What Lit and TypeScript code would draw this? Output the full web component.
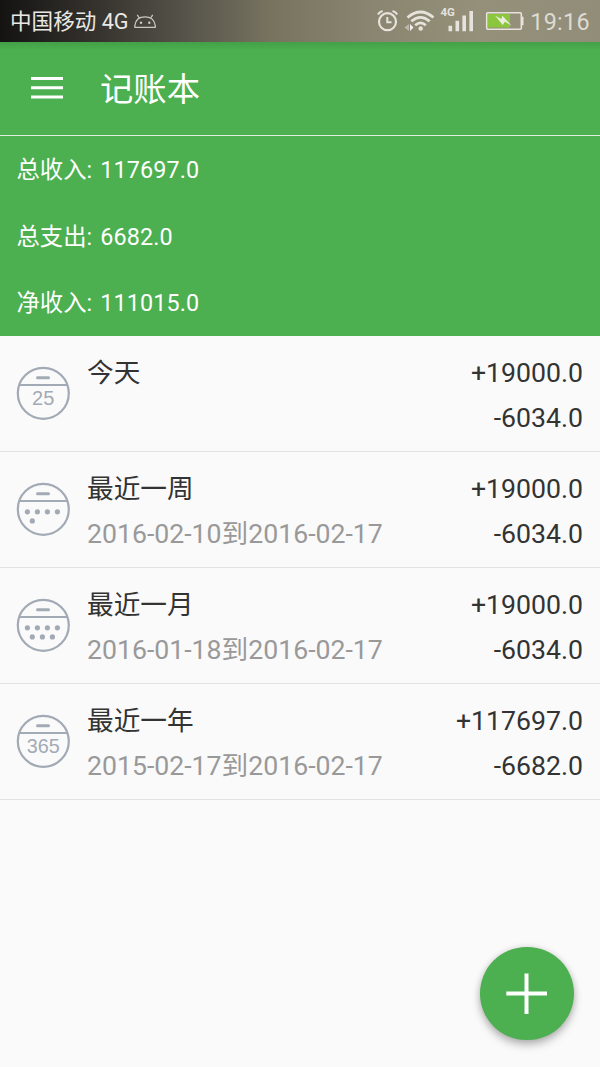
import { LitElement, html, css, svg, nothing } from "lit";
import { customElement, property } from "lit/decorators.js";

const FONT = css`Roboto, "Noto Sans CJK SC", sans-serif`;

@customElement("status-bar")
class StatusBar extends LitElement {
  static styles = css`
    :host {
      display: flex;
      align-items: center;
      height: 42px;
      padding: 0 10px 0 10px;
      box-sizing: border-box;
      font-family: ${FONT};
      color: #e9e8e4;
      background: linear-gradient(90deg, #141312 0, #37342f 100px, #56534a 185px, #77735f 270px, #8a8570 370px, #959079 480px, #928d79 600px);
    }
    .carrier { font-size: 21.6px; line-height: 42px; white-space: pre; flex: 1; display: flex; align-items: center; padding-top: 1px; }
    .robot { margin: -1px 0 0 4px; }
    .time { font-size: 23.3px; line-height: 42px; letter-spacing: 0.35px; margin-top: 1px; color: #dddbd3; }
    svg { display: block; }
  `;
  render() {
    return html`
      <div class="carrier">中国移动 4G<svg class="robot" width="24" height="42" viewBox="132 0 24 42" fill="none" stroke="#c9c8c4" stroke-width="1.3">
          <path d="M133.800 27.300V25.500C134.500 20 138.500 16.800 144 16.800S153.600 20 154.300 25.500V27.300Z M138.300 18L136.300 14.800 M149.700 18L151.700 14.800" stroke-linejoin="round"/>
          <circle cx="140" cy="22.700" r="1.200" fill="#c9c8c4" stroke="none"/><circle cx="148.300" cy="22.700" r="1.200" fill="#c9c8c4" stroke="none"/>
        </svg></div>
      <svg width="156" height="42" viewBox="374 0 156 42" fill="none" stroke="#e5e3dc">
        <circle cx="387.500" cy="21.700" r="8.500" stroke-width="2.200"/>
        <path d="M387.300 17v5.300h4.200" stroke-width="2"/>
        <path d="M378 14.500Q379.500 11.800 382.700 11 M397.200 14.500Q395.700 11.800 392.500 11" stroke-width="2.200"/>
        <path d="M407.500 17.500Q420.500 6.500 433.500 17.500" stroke-width="2.700"/>
        <path d="M411.300 21.300Q420.500 13.300 429.700 21.300" stroke-width="2.700"/>
        <path d="M415.200 25.200Q420.500 20.500 425.800 25.200" stroke-width="2.600"/>
        <circle cx="420.700" cy="28.500" r="2.200" fill="#e5e3dc" stroke="none"/>
        <path d="M409 24v7l-4.500-3.500z" fill="#bbb7a9" stroke="none"/>
        <path d="M410 24v7l3.500-3.500z" fill="#f2f1ed" stroke="none"/>
        <text x="440.500" y="16" font-family="Roboto" font-size="11.500" font-weight="700" fill="#e5e3dc" stroke="none">4G</text>
        <path d="M450.300 31.300v-5.500 M457.300 31.300v-10.500 M464.200 31.300v-15.800 M471.200 31.300V11" stroke-width="3.600"/>
        <rect x="488" y="14" width="22" height="13.500" fill="#8cc63c" stroke="none"/>
        <rect x="486.700" y="12.700" width="34.600" height="16.600" rx="1" stroke-width="1.600"/>
        <path d="M521.500 16.700h2v8.600h-2z" fill="#e5e3dc" stroke="none"/>
        <path d="M495 15.500l6.200 3.500 1.200-3.200 9 9.700-6.500-3.800-2.200 3.200z" fill="#e9eedd" stroke="none"/>
      </svg>
      <div class="time">19:16</div>
    `;
  }
}

type CalendarKind = "day" | "week" | "month" | "year";

@customElement("calendar-icon")
class CalendarIcon extends LitElement {
  @property() kind: CalendarKind = "day";
  static styles = css`
    :host { display: block; width: 54px; height: 54px; }
    svg { display: block; }
    .label { font-family: "Liberation Sans", sans-serif; fill: #a2aab5; text-anchor: middle; }
  `;
  private dots(xs: number[], y: number) {
    return xs.map((x) => svg`<circle cx=${x} cy=${y} r="2.600" fill="#a2aab5"/>`);
  }
  private body() {
    switch (this.kind) {
      case "day":
        return svg`<text class="label" x="27.200" y="39" font-size="20">25</text>`;
      case "year":
        return svg`<text class="label" x="27.200" y="39.300" font-size="19.800">365</text>`;
      case "week":
        return svg`${this.dots([11.4, 21.4, 31.4, 41.4], 29.8)}${this.dots([16.3], 38.9)}`;
      default:
        return svg`${this.dots([11.4, 21.4, 31.4, 41.4], 29.8)}${this.dots([16.3, 26.4, 36.4], 38.9)}`;
    }
  }
  render() {
    return html`<svg width="54" height="54" viewBox="0 0 54 54" fill="none" stroke="none">
      <circle cx="27.300" cy="27.300" r="25.500" stroke="#a2aab5" stroke-width="2.200"/>
      <path d="M3.500 19H51" stroke="#a2aab5" stroke-width="2.200"/>
      <path d="M21.500 11.800H32.500" stroke="#a2aab5" stroke-width="3" stroke-linecap="round"/>
      ${this.body()}
    </svg>`;
  }
}

interface Period {
  kind: CalendarKind;
  title: string;
  range?: string;
  income: string;
  expense: string;
}

const PERIODS: Period[] = [
  { kind: "day", title: "今天", income: "+19000.0", expense: "-6034.0" },
  { kind: "week", title: "最近一周", range: "2016-02-10到2016-02-17", income: "+19000.0", expense: "-6034.0" },
  { kind: "month", title: "最近一月", range: "2016-01-18到2016-02-17", income: "+19000.0", expense: "-6034.0" },
  { kind: "year", title: "最近一年", range: "2015-02-17到2016-02-17", income: "+117697.0", expense: "-6682.0" },
];

const TOTALS = [
  ["总收入:", "117697.0"],
  ["总支出:", "6682.0"],
  ["净收入:", "111015.0"],
];

@customElement("app-root")
class AppRoot extends LitElement {
  static styles = css`
    :host {
      display: block;
      position: relative;
      height: 1067px;
      overflow: hidden;
      background: #fafafa;
      font-family: ${FONT};
    }
    .toolbar {
      display: flex;
      align-items: center;
      height: 94px;
      box-sizing: border-box;
      padding-left: 31px;
      gap: 37px;
      color: #fff;
      background: linear-gradient(#43a047, #4caf50 8px);
      border-bottom: 1px solid #dcf0dc;
    }
    .menu { display: block; margin-top: -2px; }
    .title { font-size: 33.33px; line-height: 48px; font-weight: 400; margin: 3px 0 0; }
    .totals { height: 200px; background: #4caf50; color: #fff; }
    .total {
      display: flex;
      gap: 8px;
      height: 66.67px;
      padding-left: 16.5px;
      font-size: 23.33px;
      line-height: 69px;
    }
    .value { letter-spacing: 0.15px; }
    .row {
      display: flex;
      align-items: flex-start;
      height: 116px;
      box-sizing: border-box;
      padding: 15px 17px 0 16px;
      border-bottom: 1px solid #e2e2e2;
      font-size: 26.67px;
      line-height: 45px;
      color: #333;
    }
    .row calendar-icon { margin: 15px 17px 0 0; }
    .text { flex: 1; }
    .range { color: #999; }
    .amounts { text-align: right; }
    .fab {
      position: absolute;
      right: 26.5px;
      bottom: 27px;
      width: 93.5px;
      height: 93.5px;
      padding: 0;
      border: 0;
      border-radius: 50%;
      background: #4caf50;
      box-shadow: 0 5px 9px rgba(0, 0, 0, 0.26), 0 0 6px rgba(0, 0, 0, 0.12);
    }
    .fab svg { display: block; }
  `;
  render() {
    return html`
      <status-bar></status-bar>
      <header class="toolbar">
        <svg class="menu" width="32" height="24" viewBox="0 0 32 24" stroke="#fff" stroke-width="3">
          <path d="M0 2.500H32M0 11.700H32M0 21H32"/>
        </svg>
        <h1 class="title">记账本</h1>
      </header>
      <section class="totals">
        ${TOTALS.map(([label, value]) => html`<div class="total"><span>${label}</span><span class="value">${value}</span></div>`)}
      </section>
      <main>
        ${PERIODS.map(
          (p) => html`<div class="row">
            <calendar-icon .kind=${p.kind}></calendar-icon>
            <div class="text">
              <div>${p.title}</div>
              ${p.range ? html`<div class="range">${p.range}</div>` : nothing}
            </div>
            <div class="amounts"><div>${p.income}</div><div>${p.expense}</div></div>
          </div>`
        )}
      </main>
      <button class="fab" aria-label="添加">
        <svg width="93" height="93" viewBox="0 0 93 93" stroke="#fff" stroke-width="4"><path d="M26.300 46.500H67M46.500 26.500V67"/></svg>
      </button>
    `;
  }
}
